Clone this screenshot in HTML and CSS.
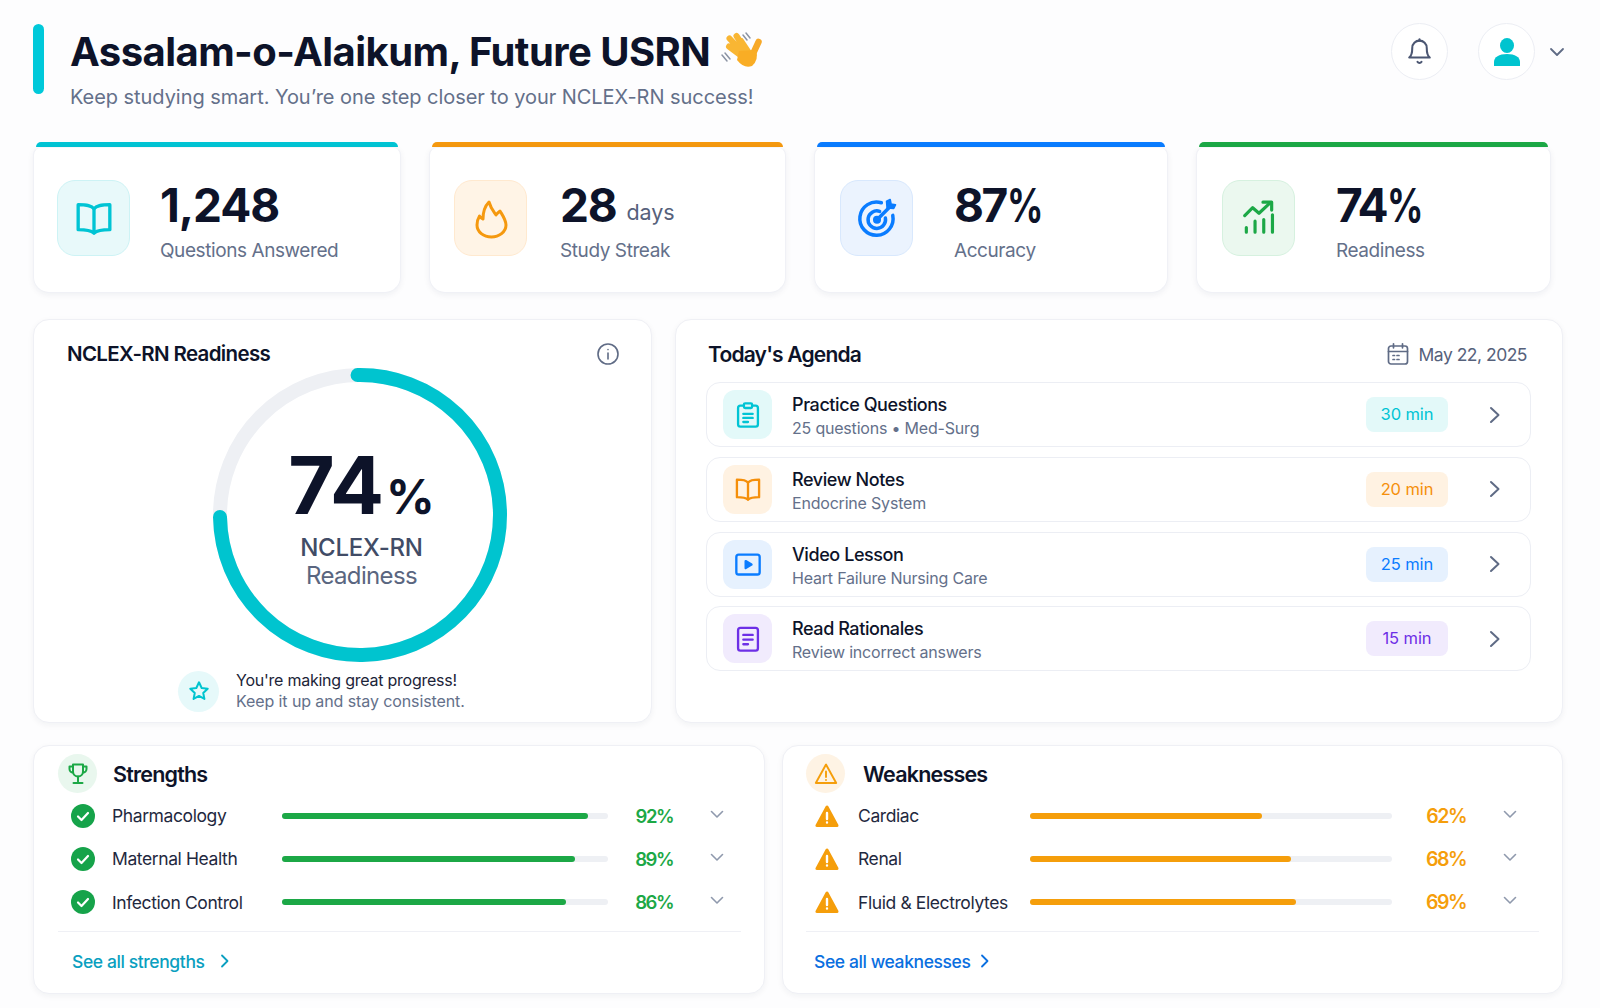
FILE: index.html
```html
<!DOCTYPE html>
<html lang="en">
<head>
  <meta charset="UTF-8" />
  <meta name="viewport" content="width=device-width, initial-scale=1.0"/>
  <title>NCLEX-RN Dashboard</title>
  <link rel="stylesheet" href="styles.css">
</head>
<body>
  <header class="top">
    <div class="accent"></div>
    <div class="greeting">
      <div class="title-line">
        <h1>Assalam-o-Alaikum, Future USRN</h1>
        <svg class="wave" viewBox="0 0 50 50">
          <g fill="none" stroke-linecap="round">
            <path d="M25 15 33 27M20.500 10 31 26M13.500 12.500 28 28M13 20.500 27 31" stroke="#f9b633" stroke-width="6"/>
            <path d="M36 30 42.500 16" stroke="#f7a928" stroke-width="6.500"/>
          </g>
          <path d="M23 25 40 24Q43 34 36 40 28 43 21 34Z" fill="#f9ad25"/>
          <path d="M27 9 31 14M30 7 34 12M6 29 11 35M9 27 14 33" stroke="#8b93a3" stroke-width="1.500" stroke-linecap="round"/>
        </svg>
      </div>
      <p class="subtitle">Keep studying smart. You’re one step closer to your NCLEX-RN success!</p>
    </div>
    <div class="top-actions">
      <button class="round-btn">
        <svg width="29" height="31" viewBox="0 0 24 24" fill="none" stroke="#4b5672" stroke-width="1.700" stroke-linecap="round" stroke-linejoin="round"><path d="M6 9a6 6 0 0 1 12 0c0 6 2.500 8 2.500 8h-17S6 15 6 9"/><path d="M10.300 20.500a2 2 0 0 0 3.400 0"/><path d="M12 3V1.800"/></svg>
      </button>
      <button class="round-btn avatar">
        <svg width="28" height="30" viewBox="0 0 28 30" fill="#00c4cf"><ellipse cx="14" cy="8.500" rx="7" ry="7.500"/><path d="M1 29v-4c0-5 5-8 13-8s13 3 13 8v4z"/></svg>
      </button>
      <svg class="chev-down" width="16" height="10" viewBox="0 0 16 10" fill="none" stroke="#5f6b85" stroke-width="1.800" stroke-linecap="round" stroke-linejoin="round"><path d="M2 2l6 6 6-6"/></svg>
    </div>
  </header>

  <section class="stats">
    <div class="stat stat-teal">
      <div class="stat-bar"></div>
      <div class="stat-body">
        <div class="stat-icon">
          <svg width="40" height="40" viewBox="0 0 24 24" fill="none" stroke="currentColor" stroke-width="2" stroke-linecap="round" stroke-linejoin="round"><path d="M12 6.500C10.500 4.500 8 4 2.500 4v15c5 0 7.500.300 9.500 2 2-1.700 4.500-2 9.500-2V4C16 4 13.500 4.500 12 6.500z"/><path d="M12 6.500V21"/></svg>
        </div>
        <div>
          <div class="stat-num">1,248</div>
          <div class="stat-label">Questions Answered</div>
        </div>
      </div>
    </div>
    <div class="stat stat-orange">
      <div class="stat-bar"></div>
      <div class="stat-body">
        <div class="stat-icon">
          <svg width="52" height="52" viewBox="0 0 52 52" fill="none" stroke="currentColor" stroke-width="3" stroke-linejoin="round"><path d="M24 10C26 17 29 20 31 23C32 21.500 33.500 20.500 35 19C38 24 41 28 41 33C41 40 34 45 26.500 45C18.500 45 12 40 12 33C12 29.500 13 26.500 14.500 24C15.500 25.500 16.500 26.500 18 27C18 20 20 14 24 10Z"/></svg>
        </div>
        <div>
          <div class="stat-num">28 <span class="stat-unit">days</span></div>
          <div class="stat-label">Study Streak</div>
        </div>
      </div>
    </div>
    <div class="stat stat-blue">
      <div class="stat-bar"></div>
      <div class="stat-body">
        <div class="stat-icon">
          <svg width="42" height="42" viewBox="0 0 24 24" fill="none" stroke="currentColor" stroke-width="2" stroke-linecap="round" stroke-linejoin="round"><path d="M14.500 3.300A9.500 9.500 0 1 0 21 10.500"/><path d="M13.500 8.200A5 5 0 1 0 16.800 12"/><circle cx="12" cy="13" r="1.300"/><path d="M12 13l7-7"/><path d="M17.500 2.500l.3 3.700 3.700.3 1-2-2.500-.5-.5-2.500z" fill="currentColor" stroke-width="1"/></svg>
        </div>
        <div>
          <div class="stat-num tight">87<span class="stat-pct">%</span></div>
          <div class="stat-label">Accuracy</div>
        </div>
      </div>
    </div>
    <div class="stat stat-green">
      <div class="stat-bar"></div>
      <div class="stat-body">
        <div class="stat-icon">
          <svg width="38" height="38" viewBox="0 0 24 24" fill="none" stroke="currentColor" stroke-width="2" stroke-linecap="round" stroke-linejoin="round"><path d="M3 10.500l5-5 4 3.500 7-6.500"/><path d="M14.500 2H20v5"/><path d="M4 21v-3M9.500 21v-7M15 21v-8M20.500 21V10"/></svg>
        </div>
        <div>
          <div class="stat-num tight">74<span class="stat-pct">%</span></div>
          <div class="stat-label">Readiness</div>
        </div>
      </div>
    </div>
  </section>

  <section class="middle">
    <div class="card readiness">
      <div class="card-head">
        <h2>NCLEX-RN Readiness</h2>
        <svg class="info" width="24" height="24" viewBox="0 0 24 24" fill="none" stroke="#5f6b85" stroke-width="1.600" stroke-linecap="round"><circle cx="12" cy="12" r="10"/><path d="M12 11v6M12 7.500v.1"/></svg>
      </div>
      <div class="gauge">
        <svg class="gauge-ring" width="296" height="296" viewBox="0 0 296 296" fill="none" stroke-width="14" stroke-linecap="round">
          <circle cx="148" cy="148" r="140" stroke="#eef0f4"/>
          <circle cx="148" cy="148" r="140" stroke="#00c4cf" stroke-dasharray="660 880" transform="rotate(-91 148 148)"/>
        </svg>
        <div class="gauge-text">
          <div class="gauge-num">74<span>%</span></div>
          <div class="gauge-l1">NCLEX-RN</div>
          <div class="gauge-l2">Readiness</div>
        </div>
      </div>
      <div class="note">
        <div class="note-icon">
          <svg width="22" height="22" viewBox="0 0 24 24" fill="none" stroke="#00c4cf" stroke-width="2.200" stroke-linejoin="round"><path d="M12 2.500l2.900 6.200 6.600.8-4.900 4.600 1.300 6.600L12 17.400l-5.900 3.300 1.300-6.600-4.900-4.600 6.600-.8z"/></svg>
        </div>
        <div>
          <div class="note-main">You're making great progress!</div>
          <div class="note-sub">Keep it up and stay consistent.</div>
        </div>
      </div>
    </div>

    <div class="card agenda">
      <div class="agenda-head">
        <h2>Today's Agenda</h2>
        <div class="agenda-date">
          <svg width="24" height="24" viewBox="0 0 24 24" fill="none" stroke="#5f6b85" stroke-width="1.700" stroke-linecap="round" stroke-linejoin="round"><rect x="2.500" y="4" width="19" height="18" rx="2.500"/><path d="M2.500 9.500h19M7.500 1.800v4M16.500 1.800v4M7 13.500h1.500M11 13.500h2M7 17.500h1.500M11 17.500h2"/></svg>
          May 22, 2025
        </div>
      </div>
      <div class="agenda-list">
        <div class="agenda-row row-teal">
          <div class="row-icon">
            <svg width="28" height="28" viewBox="0 0 24 24" fill="none" stroke="currentColor" stroke-width="2" stroke-linecap="round" stroke-linejoin="round"><rect x="3.500" y="4" width="17" height="18" rx="2"/><rect x="8.500" y="2" width="7" height="4" rx="1" fill="#e2f8f8"/><path d="M8 11h8M8 14.500h8M8 18h4"/></svg>
          </div>
          <div class="row-text">
            <div class="row-title">Practice Questions</div>
            <div class="row-sub">25 questions • Med-Surg</div>
          </div>
          <div class="row-badge">30 min</div>
          <svg class="row-chev" width="12" height="18" viewBox="0 0 12 18" fill="none" stroke="#5f6b85" stroke-width="2" stroke-linecap="round" stroke-linejoin="round"><path d="M2 2l7.500 7L2 16"/></svg>
        </div>
        <div class="agenda-row row-orange">
          <div class="row-icon">
            <svg width="28" height="28" viewBox="0 0 24 24" fill="none" stroke="currentColor" stroke-width="2" stroke-linecap="round" stroke-linejoin="round"><path d="M12 6.500C10.500 4.500 8 4 2.500 4v15c5 0 7.500.300 9.500 2 2-1.700 4.500-2 9.500-2V4C16 4 13.500 4.500 12 6.500z"/><path d="M12 6.500V21"/></svg>
          </div>
          <div class="row-text">
            <div class="row-title">Review Notes</div>
            <div class="row-sub">Endocrine System</div>
          </div>
          <div class="row-badge">20 min</div>
          <svg class="row-chev" width="12" height="18" viewBox="0 0 12 18" fill="none" stroke="#5f6b85" stroke-width="2" stroke-linecap="round" stroke-linejoin="round"><path d="M2 2l7.500 7L2 16"/></svg>
        </div>
        <div class="agenda-row row-blue">
          <div class="row-icon">
            <svg width="28" height="28" viewBox="0 0 24 24" fill="none" stroke="currentColor" stroke-width="2" stroke-linecap="round" stroke-linejoin="round"><rect x="2" y="4" width="20" height="17" rx="2"/><path d="M10 9.500l5 3-5 3z" fill="currentColor"/></svg>
          </div>
          <div class="row-text">
            <div class="row-title">Video Lesson</div>
            <div class="row-sub">Heart Failure Nursing Care</div>
          </div>
          <div class="row-badge">25 min</div>
          <svg class="row-chev" width="12" height="18" viewBox="0 0 12 18" fill="none" stroke="#5f6b85" stroke-width="2" stroke-linecap="round" stroke-linejoin="round"><path d="M2 2l7.500 7L2 16"/></svg>
        </div>
        <div class="agenda-row row-purple">
          <div class="row-icon">
            <svg width="28" height="28" viewBox="0 0 24 24" fill="none" stroke="currentColor" stroke-width="2" stroke-linecap="round" stroke-linejoin="round"><rect x="3.500" y="2.500" width="17" height="19.500" rx="2"/><path d="M8 8.500h8M8 12.500h8M8 16.500h4"/></svg>
          </div>
          <div class="row-text">
            <div class="row-title">Read Rationales</div>
            <div class="row-sub">Review incorrect answers</div>
          </div>
          <div class="row-badge">15 min</div>
          <svg class="row-chev" width="12" height="18" viewBox="0 0 12 18" fill="none" stroke="#5f6b85" stroke-width="2" stroke-linecap="round" stroke-linejoin="round"><path d="M2 2l7.500 7L2 16"/></svg>
        </div>
      </div>
    </div>
  </section>

  <section class="bottom">
    <div class="card skills strengths">
      <div class="skills-head">
        <div class="skills-icon">
          <svg width="24" height="24" viewBox="0 0 24 24" fill="none" stroke="currentColor" stroke-width="2" stroke-linecap="round" stroke-linejoin="round"><path d="M7 2.500h10v7a5 5 0 0 1-10 0z"/><path d="M7 4.500H3.500v2.500A3.500 3.500 0 0 0 7 10.500M17 4.500h3.500v2.500a3.500 3.500 0 0 1-3.500 3.500"/><path d="M12 14.500v5M7.500 21h9"/></svg>
        </div>
        <h2>Strengths</h2>
      </div>
      <div class="skill-row">
        <svg class="skill-mark" width="24" height="24" viewBox="0 0 24 24"><circle cx="12" cy="12" r="12" fill="#16a34a"/><path d="M7 12.500l3.500 3.500 6.500-7" fill="none" stroke="#fff" stroke-width="2.200" stroke-linecap="round" stroke-linejoin="round"/></svg>
        <div class="skill-name">Pharmacology</div>
        <div class="track"><div class="fill" style="width: 94%"></div></div>
        <div class="skill-pct">92%</div>
        <svg class="skill-chev" width="14" height="9" viewBox="0 0 14 9" fill="none" stroke="#8f99ad" stroke-width="1.600" stroke-linecap="round" stroke-linejoin="round"><path d="M1.500 1.500L7 7l5.500-5.500"/></svg>
      </div>
      <div class="skill-row">
        <svg class="skill-mark" width="24" height="24" viewBox="0 0 24 24"><circle cx="12" cy="12" r="12" fill="#16a34a"/><path d="M7 12.500l3.500 3.500 6.500-7" fill="none" stroke="#fff" stroke-width="2.200" stroke-linecap="round" stroke-linejoin="round"/></svg>
        <div class="skill-name">Maternal Health</div>
        <div class="track"><div class="fill" style="width: 90%"></div></div>
        <div class="skill-pct">89%</div>
        <svg class="skill-chev" width="14" height="9" viewBox="0 0 14 9" fill="none" stroke="#8f99ad" stroke-width="1.600" stroke-linecap="round" stroke-linejoin="round"><path d="M1.500 1.500L7 7l5.500-5.500"/></svg>
      </div>
      <div class="skill-row">
        <svg class="skill-mark" width="24" height="24" viewBox="0 0 24 24"><circle cx="12" cy="12" r="12" fill="#16a34a"/><path d="M7 12.500l3.500 3.500 6.500-7" fill="none" stroke="#fff" stroke-width="2.200" stroke-linecap="round" stroke-linejoin="round"/></svg>
        <div class="skill-name">Infection Control</div>
        <div class="track"><div class="fill" style="width: 87%"></div></div>
        <div class="skill-pct">86%</div>
        <svg class="skill-chev" width="14" height="9" viewBox="0 0 14 9" fill="none" stroke="#8f99ad" stroke-width="1.600" stroke-linecap="round" stroke-linejoin="round"><path d="M1.500 1.500L7 7l5.500-5.500"/></svg>
      </div>
      <div class="skills-foot">
        <a href="#">See all strengths</a>
        <svg width="10" height="14" viewBox="0 0 10 14" fill="none" stroke="currentColor" stroke-width="1.800" stroke-linecap="round" stroke-linejoin="round"><path d="M2 1.500L7.500 7 2 12.500"/></svg>
      </div>
    </div>

    <div class="card skills weaknesses">
      <div class="skills-head">
        <div class="skills-icon">
          <svg width="24" height="24" viewBox="0 0 24 24" fill="none" stroke="currentColor" stroke-width="1.900" stroke-linecap="round" stroke-linejoin="round"><path d="M12 2.500L1.800 21h20.400z"/><path d="M12 9.500v5.500M12 18v.1"/></svg>
        </div>
        <h2>Weaknesses</h2>
      </div>
      <div class="skill-row">
        <svg class="skill-mark" width="24" height="24" viewBox="0 0 24 24"><path d="M12 3L2 21.500h20z" fill="#f59e0b" stroke="#f59e0b" stroke-width="3" stroke-linejoin="round"/><path d="M12 9v6M12 18.500v.1" stroke="#fff" stroke-width="2.400" stroke-linecap="round"/></svg>
        <div class="skill-name">Cardiac</div>
        <div class="track"><div class="fill" style="width: 64%"></div></div>
        <div class="skill-pct">62%</div>
        <svg class="skill-chev" width="14" height="9" viewBox="0 0 14 9" fill="none" stroke="#8f99ad" stroke-width="1.600" stroke-linecap="round" stroke-linejoin="round"><path d="M1.500 1.500L7 7l5.500-5.500"/></svg>
      </div>
      <div class="skill-row">
        <svg class="skill-mark" width="24" height="24" viewBox="0 0 24 24"><path d="M12 3L2 21.500h20z" fill="#f59e0b" stroke="#f59e0b" stroke-width="3" stroke-linejoin="round"/><path d="M12 9v6M12 18.500v.1" stroke="#fff" stroke-width="2.400" stroke-linecap="round"/></svg>
        <div class="skill-name">Renal</div>
        <div class="track"><div class="fill" style="width: 72%"></div></div>
        <div class="skill-pct">68%</div>
        <svg class="skill-chev" width="14" height="9" viewBox="0 0 14 9" fill="none" stroke="#8f99ad" stroke-width="1.600" stroke-linecap="round" stroke-linejoin="round"><path d="M1.500 1.500L7 7l5.500-5.500"/></svg>
      </div>
      <div class="skill-row">
        <svg class="skill-mark" width="24" height="24" viewBox="0 0 24 24"><path d="M12 3L2 21.500h20z" fill="#f59e0b" stroke="#f59e0b" stroke-width="3" stroke-linejoin="round"/><path d="M12 9v6M12 18.500v.1" stroke="#fff" stroke-width="2.400" stroke-linecap="round"/></svg>
        <div class="skill-name">Fluid &amp; Electrolytes</div>
        <div class="track"><div class="fill" style="width: 73.500%"></div></div>
        <div class="skill-pct">69%</div>
        <svg class="skill-chev" width="14" height="9" viewBox="0 0 14 9" fill="none" stroke="#8f99ad" stroke-width="1.600" stroke-linecap="round" stroke-linejoin="round"><path d="M1.500 1.500L7 7l5.500-5.500"/></svg>
      </div>
      <div class="skills-foot">
        <a href="#">See all weaknesses</a>
        <svg width="10" height="14" viewBox="0 0 10 14" fill="none" stroke="currentColor" stroke-width="1.800" stroke-linecap="round" stroke-linejoin="round"><path d="M2 1.500L7.500 7 2 12.500"/></svg>
      </div>
    </div>
  </section>
</body>
</html>
```

FILE: styles.css
```css
* { box-sizing: border-box; }
body {
  margin: 0;
  padding: 24px 37px 0 33px;
  width: 1600px;
  height: 1008px;
  overflow: hidden;
  background: #fdfdfe;
  font-family: Inter, "Noto Sans", sans-serif;
  color: #0d1329;
}
h1, h2, p { margin: 0; }

/* header */
.top {
  display: flex;
  align-items: flex-start;
  height: 118px;
}
.accent {
  width: 11px;
  height: 70px;
  border-radius: 6px;
  background: #00c9da;
}
.greeting { margin-left: 26px; flex: 1; }
.title-line { display: flex; align-items: center; height: 54px; }
.top h1 {
  font-size: 40px;
  font-weight: 700;
  letter-spacing: -0.56px;
  white-space: nowrap;
}
.wave { width: 50px; height: 50px; margin-left: 6px; flex: none; }
.subtitle {
  margin-top: 7px;
  font-size: 20px;
  letter-spacing: -0.05px;
  color: #64708a;
}
.top-actions {
  display: flex;
  align-items: center;
  margin-top: -1px;
  margin-right: -2px;
}
.round-btn {
  display: flex;
  align-items: center;
  justify-content: center;
  width: 57px;
  height: 57px;
  padding: 0;
  border: 1px solid #eceef4;
  border-radius: 50%;
  background: #fff;
}
.avatar { margin-left: 30px; }
.chev-down { margin-left: 14px; }

/* stat cards */
.stats {
  display: grid;
  grid-template-columns: 368px 357px 354px 355px;
  gap: 28px;
}
.stat-bar {
  height: 5px;
  margin: 0 3px;
  border-radius: 5px 5px 0 0;
  background: var(--tone);
}
.stat-body {
  display: flex;
  align-items: center;
  height: 146px;
  padding-left: 25px;
  gap: 41px;
  background: #fff;
  border: 1px solid #f0f1f6;
  border-top-color: #f6f7fa;
  border-radius: 8px 8px 16px 16px;
  box-shadow: 0 2px 6px rgba(20, 30, 60, 0.06);
}
.stat-teal .stat-body { padding-left: 23px; gap: 30px; }
.stat-orange .stat-body { padding-left: 24px; gap: 33px; }
.stat-icon {
  display: flex;
  align-items: center;
  justify-content: center;
  width: 73px;
  height: 76px;
  margin-top: -4px;
  border: 1px solid var(--edge);
  border-radius: 18px;
  background: var(--soft);
  color: var(--tone);
}
.stat-num {
  font-size: 46px;
  line-height: 56px;
  font-weight: 700;
  letter-spacing: -1.1px;
  margin-top: 1px;
}
.stat-num.tight { letter-spacing: -2.5px; }
.stat-pct {
  display: inline-block;
  margin-left: 1px;
  transform: scaleX(0.78);
  transform-origin: left center;
}
.stat-unit {
  font-size: 21.500px;
  line-height: 1;
  font-weight: 400;
  letter-spacing: -0.1px;
  vertical-align: 2px;
  color: #56617b;
}
.stat-label {
  margin-top: 5px;
  font-size: 19px;
  line-height: 26px;
  letter-spacing: -0.42px;
  color: #64708a;
}
.stat-teal { --tone: #00c4d4; --soft: #e8f9fa; --edge: #cdf3f5; }
.stat-orange { --tone: #f5990f; --soft: #fff4e6; --edge: #ffe9cf; }
.stat-blue { --tone: #0a7cff; --soft: #ebf3fe; --edge: #d8e8fd; }
.stat-green { --tone: #1ca846; --soft: #ebf8ef; --edge: #d6f1df; }

/* shared card */
.card {
  background: #fff;
  border: 1px solid #eff0f5;
  border-radius: 16px;
  box-shadow: 0 2px 6px rgba(20, 30, 60, 0.05);
}
.card h2 {
  font-size: 20.500px;
  font-weight: 600;
  letter-spacing: -0.65px;
}

/* middle row */
.middle {
  display: grid;
  grid-template-columns: 619px 888px;
  gap: 23px;
  margin-top: 26px;
}
.readiness { height: 404px; padding: 20px 31px 0 33px; }
.card-head {
  display: flex;
  align-items: center;
  justify-content: space-between;
  height: 26px;
}
.info { margin-top: 2px; }
.gauge {
  position: relative;
  width: 296px;
  height: 296px;
  margin: 1px 0 0 145px;
}
.gauge-ring { display: block; }
.gauge-text {
  position: absolute;
  inset: 0;
  padding: 74px 0 0 3px;
  text-align: center;
}
.gauge-num {
  font-size: 80px;
  line-height: 88px;
  font-weight: 700;
  letter-spacing: 0;
  margin-left: 0;
}
.gauge-num span {
  font-size: 48px;
  font-weight: 700;
  margin-left: 2px;
}
.gauge-l1 {
  margin-top: -7px;
  font-size: 24px;
  line-height: 28px;
  font-weight: 500;
  letter-spacing: -0.25px;
  color: #414c66;
}
.gauge-l2 {
  font-size: 24px;
  line-height: 28px;
  letter-spacing: -0.65px;
  color: #5a6680;
}
.note {
  display: flex;
  align-items: center;
  gap: 17px;
  margin: 7px 0 0 111px;
}
.note-icon {
  display: flex;
  align-items: center;
  justify-content: center;
  width: 41px;
  height: 41px;
  border-radius: 50%;
  background: #e6f9fa;
}
.note-main { font-size: 16px; line-height: 21px; letter-spacing: -0.24px; color: #1c2438; }
.note-sub { font-size: 16px; line-height: 21px; letter-spacing: -0.1px; color: #64708a; }

.agenda { height: 404px; padding: 21px 31px 0 30px; }
.agenda-head {
  display: flex;
  align-items: center;
  justify-content: space-between;
  height: 26px;
  padding: 0 4px 0 2px;
}
.agenda-head h2 { font-size: 21px; letter-spacing: -0.8px; }
.agenda-date {
  display: flex;
  align-items: center;
  gap: 9px;
  font-size: 17.500px;
  letter-spacing: -0.5px;
  color: #56617b;
}
.agenda-list {
  display: flex;
  flex-direction: column;
  gap: 9.800px;
  margin-top: 15px;
}
.agenda-row {
  display: flex;
  align-items: center;
  height: 65px;
  padding: 0 29px 0 16px;
  border: 1px solid #eceef4;
  border-radius: 14px;
  background: #fff;
}
.row-icon {
  display: flex;
  align-items: center;
  justify-content: center;
  width: 49px;
  height: 49px;
  border-radius: 12px;
  background: var(--soft);
  color: var(--tone);
}
.row-text { flex: 1; margin-left: 20px; padding-top: 4px; }
.row-title {
  font-size: 18px;
  line-height: 24px;
  font-weight: 500;
  letter-spacing: -0.42px;
}
.row-sub {
  font-size: 16px;
  line-height: 23px;
  letter-spacing: -0.2px;
  color: #64708a;
}
.row-badge {
  width: 82px;
  height: 35px;
  border-radius: 8px;
  background: var(--soft);
  color: var(--tone);
  font-size: 16.500px;
  line-height: 35px;
  letter-spacing: -0.1px;
  text-align: center;
}
.row-chev { margin-left: 41px; }
.row-teal { --tone: #00c4d4; --soft: #e3f9f9; }
.row-orange { --tone: #f58f0a; --soft: #fff2e2; }
.row-blue { --tone: #0a7cff; --soft: #e6f1fe; }
.row-purple { --tone: #6d2fe6; --soft: #f1ebfd; }

/* strengths and weaknesses */
.bottom {
  display: grid;
  grid-template-columns: 732px 781px;
  gap: 17px;
  margin-top: 22px;
}
.skills { height: 249px; padding: 8px 23px 0 24px; }
.weaknesses { padding-left: 23px; }
.skills-head {
  display: flex;
  align-items: center;
  height: 39px;
  margin-bottom: 1px;
}
.skills-icon {
  display: flex;
  align-items: center;
  justify-content: center;
  width: 39px;
  height: 39px;
  border-radius: 50%;
  background: var(--soft);
  color: var(--tone);
}
.card.skills h2 { margin-left: 16px; font-size: 21.500px; letter-spacing: -0.8px; }
.card.weaknesses h2 { margin-left: 18px; }
.skill-row {
  display: grid;
  align-items: center;
  height: 43.300px;
}
.strengths .skill-row {
  grid-template-columns: 24px 187px 326px 65px 1fr;
  padding-left: 13px;
}
.strengths .skill-name { padding-left: 17px; }
.weaknesses .skill-row {
  grid-template-columns: 24px 191px 362px 74px 1fr;
  padding-left: 9px;
}
.skill-name {
  padding-left: 19px;
  font-size: 17.500px;
  letter-spacing: -0.4px;
  color: #1f2940;
  white-space: nowrap;
}
.track {
  height: 6px;
  border-radius: 3px;
  background: #eef0f4;
}
.fill {
  height: 6px;
  border-radius: 3px;
  background: var(--tone);
}
.skill-pct {
  text-align: right;
  font-size: 18.500px;
  font-weight: 600;
  letter-spacing: -1.5px;
  color: var(--tone);
}
.weaknesses .skill-pct { font-size: 19.500px; }
.skill-chev { margin: -3px 0 0 37px; }
.skills-foot {
  display: flex;
  align-items: center;
  gap: 15px;
  margin-top: 7px;
  padding: 19px 0 0 14px;
  border-top: 1px solid #eff0f5;
  font-size: 17.500px;
  font-weight: 500;
  letter-spacing: -0.4px;
  color: var(--link);
}
.weaknesses .skills-foot { padding-left: 8px; gap: 9px; }
.skills-foot a { color: inherit; text-decoration: none; }
.strengths { --tone: #1ca846; --soft: #e9f7ee; --link: #0a9fc0; }
.weaknesses { --tone: #f59e0b; --soft: #fef3e4; --link: #0a6fe0; }
```
